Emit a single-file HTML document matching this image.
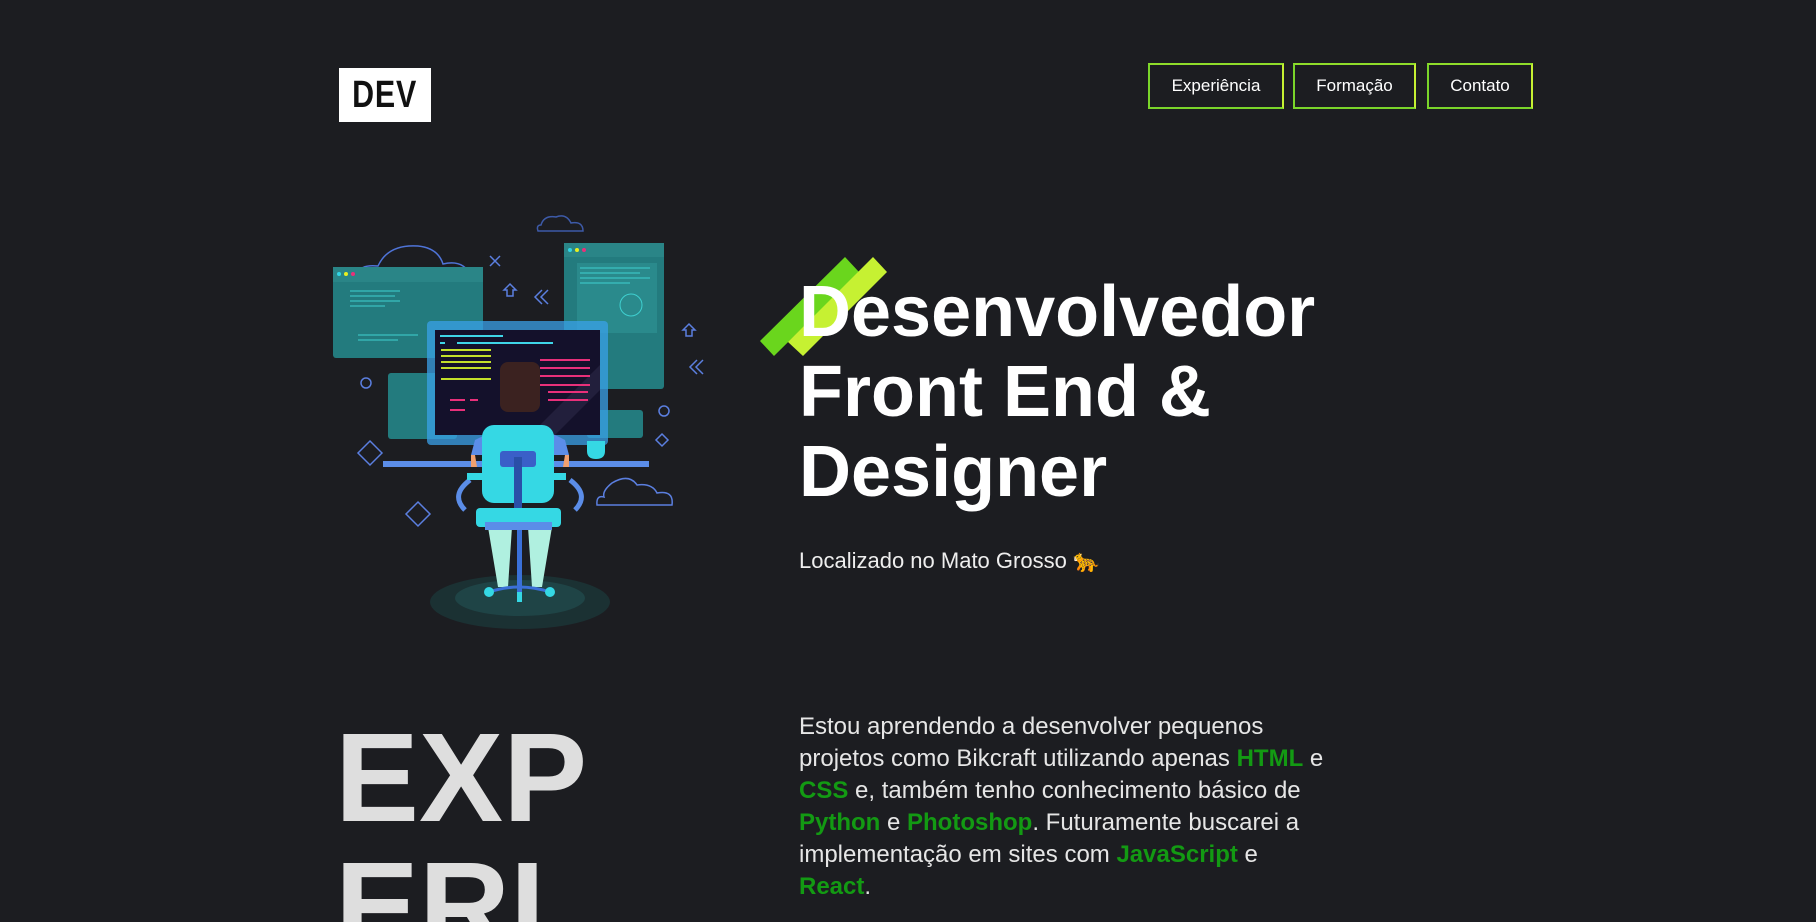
<!DOCTYPE html>
<html><head><meta charset="utf-8"><style>
html,body{margin:0;padding:0;background:#1c1d21;width:1816px;height:922px;overflow:hidden;font-family:"Liberation Sans",Arial,sans-serif;color:#fff}
.a{position:absolute}
.logo{left:339px;top:68px;width:92px;height:54px;background:#fff;color:#111;font-weight:bold;font-size:38px;display:flex;align-items:center;justify-content:center;}
.logo span{display:inline-block;transform:scaleX(.8);letter-spacing:1px}
.btn{top:63px;height:46px;border:2px solid #7ad52a;border-right-color:#c6f132;border-top-color:#8fdc2a;color:#fff;font-size:17px;display:flex;align-items:center;justify-content:center;box-sizing:border-box}
h1{margin:0;position:absolute;left:799px;top:272px;font-size:72px;line-height:80px;font-weight:bold;color:#fff}
.loc{left:799px;top:548px;font-size:22px;color:#eee}
.p{left:799px;top:711px;width:530px;font-size:24px;line-height:32px;color:#e6e6e6}
.p b{color:#139a13}
.big{left:335px;top:713px;font-size:126px;line-height:129px;font-weight:bold;color:#dedede;height:209px;overflow:hidden}
</style></head><body>
<div class="a logo"><span>DEV</span></div>
<div class="a btn" style="left:1148px;width:136px">Experiência</div>
<div class="a btn" style="left:1293px;width:123px">Formação</div>
<div class="a btn" style="left:1427px;width:106px">Contato</div>

<svg class="a" style="left:0;top:0" width="1816" height="922">
<polygon points="760,341 774,356 859,272 845,257" fill="#6ad61d"/>
<polygon points="788,342 803,356 887,272 873,257" fill="#c6f132"/>
<g fill="none" stroke="#5b7fe0" stroke-width="1.5">
<path d="M358,276 q0,-12 20,-10 q10,-22 40,-20 q20,2 25,18 q25,-6 30,20 z" stroke="#4f74d8"/>
<path d="M538,231 h45 q0,-10 -12,-8 q-5,-10 -15,-6 q-12,-2 -15,8 q-5,0 -3,6z" stroke="#3d5aa8"/>
<path d="M597,505 h75 q2,-15 -15,-12 q-5,-10 -20,-8 q-8,-12 -25,-2 q-10,8 -8,14 q-8,-2 -7,8z"/>
<path d="M490,256 l10,10 M500,256 l-10,10"/>
<path d="M542,290 l-7,7 7,7 M548,290 l-7,7 7,7"/>
<path d="M697,360 l-7,7 7,7 M703,360 l-7,7 7,7"/>
<circle cx="366" cy="383" r="5"/><circle cx="664" cy="411" r="5"/>
<path d="M370,441 l12,12 -12,12 -12,-12z"/><path d="M418,502 l12,12 -12,12 -12,-12z"/>
<path d="M662,434 l6,6 -6,6 -6,-6z"/>
<path d="M504,290 l6,-6 6,6 h-3 v6 h-6 v-6z"/><path d="M683,330 l6,-6 6,6 h-3 v6 h-6 v-6z"/>
</g>
<ellipse cx="520" cy="602" rx="90" ry="27" fill="#1b3133"/>
<ellipse cx="520" cy="598" rx="65" ry="18" fill="#1f4446"/>
<rect x="333" y="267" width="150" height="91" rx="3" fill="#237b7e"/>
<rect x="333" y="267" width="150" height="15" fill="#2a8587"/>
<circle cx="339" cy="274" r="2" fill="#31d4e4"/><circle cx="346" cy="274" r="2" fill="#e8f020"/><circle cx="353" cy="274" r="2" fill="#e8307a"/>
<g stroke="#3fd0d0" stroke-width="1"><path d="M350,291 h50 M350,296 h45 M350,301 h50 M350,306 h35 M358,335 h60 M358,340 h40"/></g>
<rect x="564" y="243" width="100" height="146" rx="3" fill="#237b7e"/>
<rect x="564" y="243" width="100" height="14" fill="#2a8587"/>
<circle cx="570" cy="250" r="2" fill="#31d4e4"/><circle cx="577" cy="250" r="2" fill="#e8f020"/><circle cx="584" cy="250" r="2" fill="#e8307a"/>
<rect x="577" y="263" width="80" height="70" fill="#2a8a8c"/>
<circle cx="631" cy="305" r="11" fill="none" stroke="#3fd0d0"/>
<g stroke="#3fd0d0" stroke-width="1"><path d="M580,268 h70 M580,273 h60 M580,278 h70 M580,283 h50"/></g>
<rect x="388" y="373" width="69" height="66" rx="3" fill="#237b7e"/>
<rect x="587" y="410" width="56" height="28" rx="3" fill="#237b7e"/>
<rect x="427" y="321" width="181" height="124" rx="4" fill="#3aa0e8" opacity=".75"/>
<rect x="435" y="330" width="165" height="105" fill="#14112b"/>
<path d="M530,435 l70,-70 v25 l-45,45z" fill="#221f3c"/>
<g stroke-width="2">
<path d="M440,336 h63 M440,343 h5 M457,343 h96" stroke="#3fd5e8"/>
<path d="M441,350 h50 M441,356 h50 M441,362 h50 M441,368 h50 M441,379 h50" stroke="#c4e02a"/>
<path d="M540,360 h50 M540,368 h50 M540,376 h50 M540,385 h50 M548,392 h40 M548,400 h40 M450,400 h15 M470,400 h8 M450,410 h15" stroke="#e8307a"/>
</g>
<rect x="383" y="461" width="266" height="6" fill="#5b8de8"/>
<path d="M587,441 h18 v10 q0,8 -9,8 q-9,0 -9,-8z" fill="#35d8e4"/>
<rect x="500" y="362" width="40" height="50" rx="8" fill="#3b2220"/>
<path d="M475,440 q45,-25 90,0 l4,15 h-98z" fill="#5b8de8"/>
<path d="M475,455 h-4 v12 h6z M565,455 h4 v12 h-6z" fill="#f0a070"/>
<path d="M470,480 q-20,15 -5,30 M570,480 q20,15 5,30" stroke="#5b8de8" stroke-width="5" fill="none"/>
<rect x="467" y="473" width="15" height="7" fill="#35d8e4"/><rect x="551" y="473" width="15" height="7" fill="#35d8e4"/>
<path d="M488,527 l10,60 h10 l4,-60z M552,527 l-10,60 h-10 l-4,-60z" fill="#b0f0e0"/>
<rect x="482" y="425" width="72" height="78" rx="12" fill="#35d8e4"/>
<rect x="500" y="451" width="36" height="16" rx="3" fill="#3a5fc8"/>
<rect x="514" y="457" width="8" height="65" fill="#2a4fa8"/>
<rect x="476" y="508" width="85" height="19" rx="4" fill="#35d8e4"/>
<rect x="485" y="522" width="67" height="8" fill="#5b8de8"/>
<rect x="517" y="530" width="5" height="65" fill="#3a70d8"/>
<path d="M489,592 q30,-10 61,0" stroke="#3a70d8" stroke-width="3" fill="none"/>
<circle cx="489" cy="592" r="5" fill="#35d8e4"/><circle cx="550" cy="592" r="5" fill="#35d8e4"/>
<rect x="517" y="592" width="5" height="10" fill="#35d8e4"/>
</svg>

<h1>Desenvolvedor<br>Front End &amp;<br>Designer</h1>
<div class="a loc">Localizado no Mato Grosso 🐆</div>
<div class="a p">Estou aprendendo a desenvolver pequenos projetos como Bikcraft utilizando apenas <b>HTML</b> e <b>CSS</b> e, também tenho conhecimento básico de <b>Python</b> e <b>Photoshop</b>. Futuramente buscarei a implementação em sites com <b>JavaScript</b> e <b>React</b>.</div>
<div class="a big">EXP<br>ERI</div>
</body></html>
